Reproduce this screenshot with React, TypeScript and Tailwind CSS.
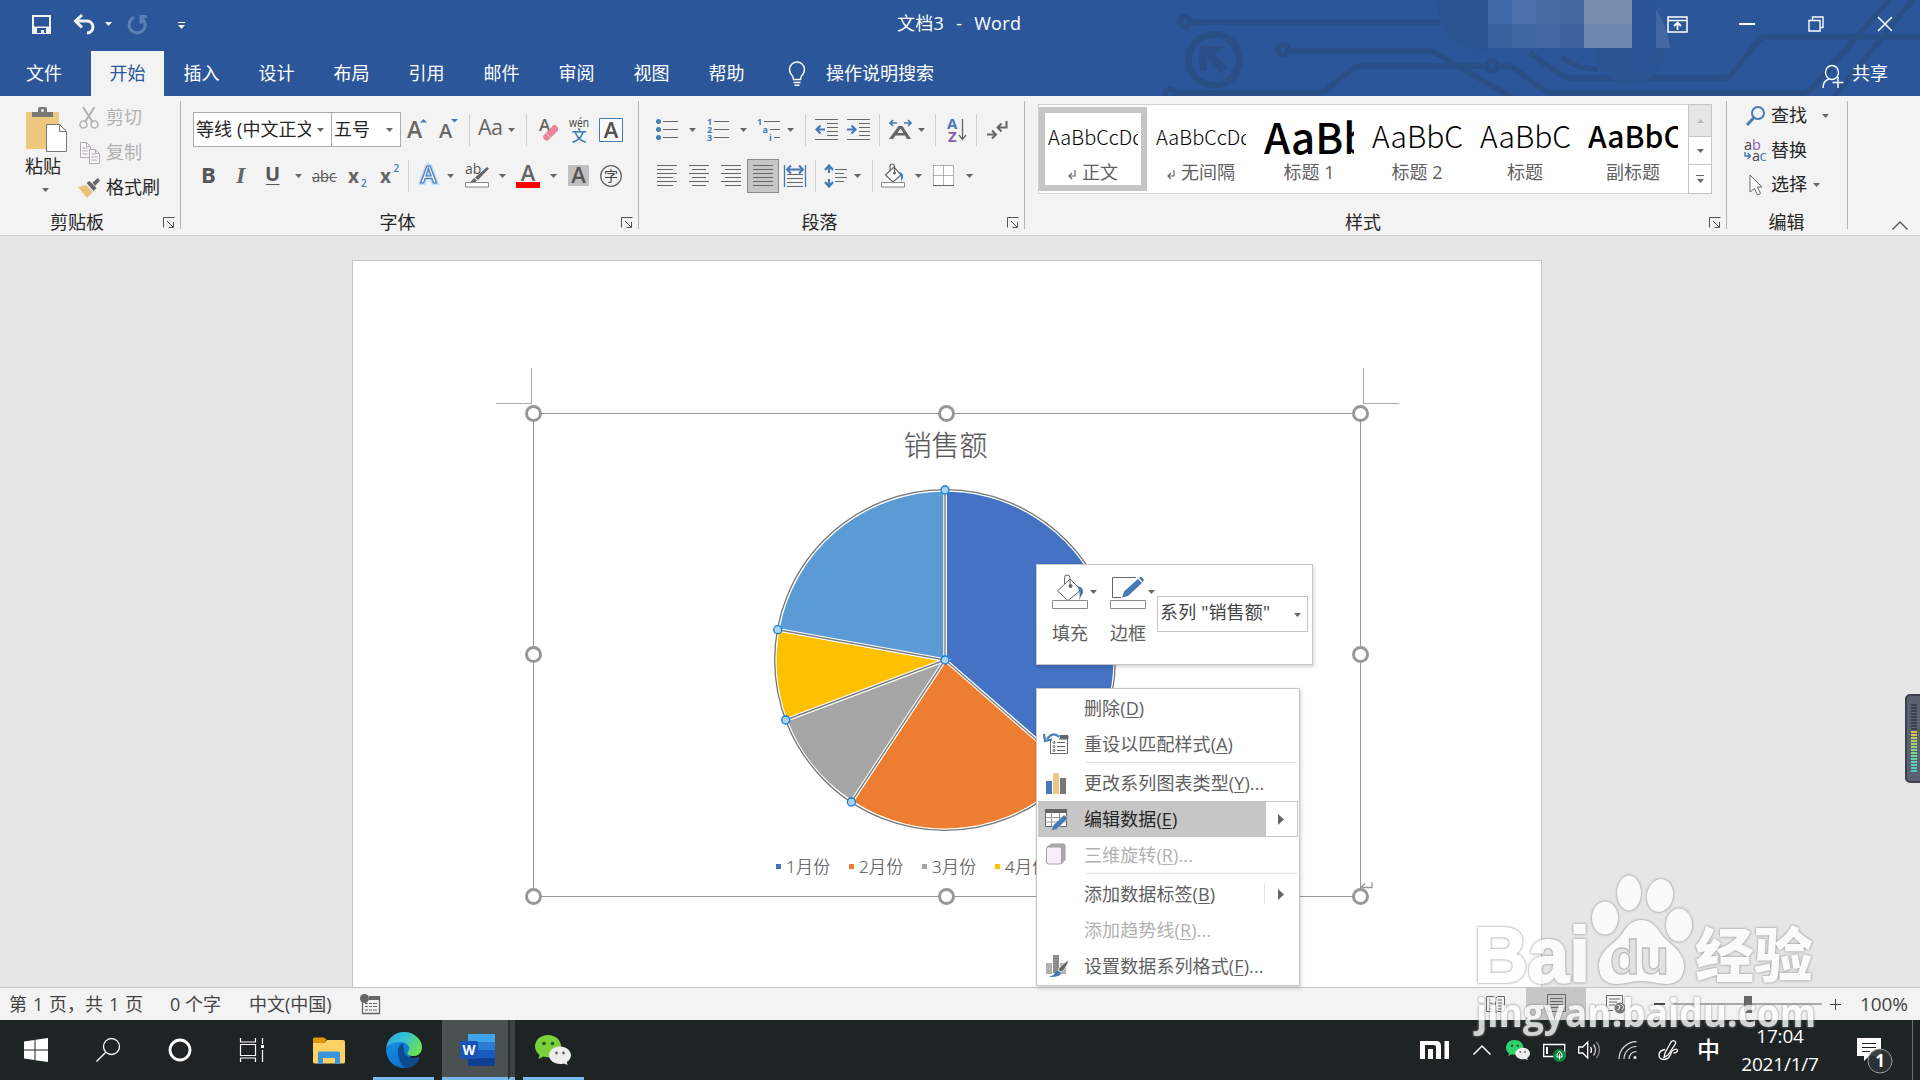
import type { ReactNode } from "react";

const BLUE = "#447ab5";
const GRAY = "#666666";

interface IconProps {
  w: number;
  h: number;
  className?: string;
  children: ReactNode;
}

function Icon({ w, h, className = "", children }: IconProps) {
  return (
    <svg width={w} height={h} viewBox={`0 0 ${w} ${h}`} fill="none" className={`shrink-0 overflow-visible ${className}`}>
      {children}
    </svg>
  );
}

function Caret({ className = "", color = GRAY }: { className?: string; color?: string }) {
  return (
    <Icon w={7} h={4} className={className}>
      <path d="M0 0h7L3.500 4z" fill={color} />
    </Icon>
  );
}

function Sep({ className = "" }: { className?: string }) {
  return <div className={`h-8 w-px shrink-0 bg-[#d0d0d0] ${className}`} />;
}

function Divider() {
  return <div className="mt-[5px] h-32 w-px shrink-0 bg-[#b4b4b4]" />;
}

function GroupLabel({ children, launcher = true, shift = "" }: { children: string; launcher?: boolean; shift?: string }) {
  return (
    <div className="mt-auto flex h-[26px] shrink-0 items-center">
      <span className={`flex-1 text-center ${shift}`}>{children}</span>
      {launcher && (
        <Icon w={12} h={11} className="mr-[5px] mt-px">
          <path d="M.5 10.500V.5h11M4 4l6 6M10.500 5v5.500h-5" stroke="#555" />
        </Icon>
      )}
    </div>
  );
}

/* ---------- header ---------- */

const mosaic = [
  "bg-[#4168a6]", "bg-[#4b70ab]", "bg-[#486ca2]", "bg-[#44679f]", "bg-[#798dae]", "bg-[#798dae]",
  "bg-[#395f9d]", "bg-[#4067a2]", "bg-[#4468a0]", "bg-[#3f639c]", "bg-[#6e87ae]", "bg-[#6e87ae]",
];

function HeaderArt() {
  return (
    <div className="pointer-events-none absolute inset-0 overflow-hidden">
      <svg width="1920" height="96" fill="none" stroke="#2a4f86" strokeWidth="5.5">
        <circle cx="1185" cy="21.500" r="5" />
        <path d="M1190 22H1440" />
        <circle cx="1214" cy="60" r="25.500" strokeWidth="7" />
        <path d="M1199 46h25l-6 7h-4l13 14-6 7-14-14v11h-8z" fill="#2a4f86" stroke="none" />
        <circle cx="1283" cy="50" r="5" />
        <path d="M1289 51h138q6 0 12 4l74 43" />
        <circle cx="1170" cy="94" r="5" />
        <path d="M1176 93h140q6 0 10-3l25-20q5-4 10-4h126" />
        <circle cx="1492" cy="66" r="5" />
        <path d="M1498 66h8q6 0 11 4l26 20q4 3 9 3h250q6 0 9-4L1892-3" />
        <path d="M1530 53l31 22q5 3 10 3h153q5 0 8-4l26-33q3-4 8-4h154" />
        <path d="M1833 98l82-101" />
        <path d="M1562 57q14 12 36 12" />
        <path d="M1488 50q-50 0-51-50h51zM1596 60q10 24 34 24t34-24V48h-68z" fill="#2a5492" stroke="none" />
        <path d="M1632 0h24v72h-24z" fill="#2a5495" stroke="none" />
        <path d="M1656 10q12 16 14 38h-14z" fill="#4267a3" stroke="none" />
      </svg>
      <div className="absolute left-[1488px] top-0 grid grid-cols-6">
        {mosaic.map((c, i) => (
          <div key={i} className={`size-6 ${c}`} />
        ))}
      </div>
    </div>
  );
}

const tabs = ["插入", "设计", "布局", "引用", "邮件", "审阅", "视图", "帮助"];

function Header() {
  return (
    <header className="relative flex h-24 shrink-0 flex-col bg-[#2b579a] text-white">
      <HeaderArt />
      <div className="relative flex h-[51px] items-center pb-[3px]">
        <Icon w={19} h={19} className="ml-8">
          <path d="M1 1h17v17H1z" stroke="#f3f3f3" strokeWidth="2" />
          <path d="M1 11.500h17V18H1z" fill="#f3f3f3" />
          <path d="M5 13h9v5h-2v-3h-3v3H5z" fill="#2b579a" />
        </Icon>
        <Icon w={22} h={19} className="ml-[22px]">
          <path d="M2 6h12a6 6 0 0 1 0 12M9 0L2.500 6 9 12.500" stroke="#f3f3f3" strokeWidth="3" />
        </Icon>
        <Caret color="#f3f3f3" className="ml-[10px]" />
        <Icon w={20} h={19} className="ml-4">
          <path d="M6 2.500a8 8 0 1 0 8 1M19 1.500h-6v7" stroke="#5b7fb3" strokeWidth="3" />
        </Icon>
        <Icon w={7} h={7} className="ml-[30px] mt-[2px]">
          <path d="M0 .5h7" stroke="#f3f3f3" />
          <path d="M0 3h7L3.500 7z" fill="#f3f3f3" />
        </Icon>
        <div className="ml-[712px] w-[124px] whitespace-pre pb-[2px] text-[18px] leading-6 tracking-[0.3px] [word-spacing:1px]">文档3&nbsp; -&nbsp; Word</div>
        <Icon w={21} h={17} className="ml-[646px]">
          <path d="M1 1h19v15H1zM1 4.500h19" stroke="#fff" strokeWidth="1.500" />
          <path d="M10.500 14V7M7 10l3.500-3.500L14 10" stroke="#fff" strokeWidth="1.800" />
        </Icon>
        <div className="ml-[51px] h-[1.500px] w-4 bg-white" />
        <Icon w={16} h={16} className="ml-[53px]">
          <path d="M1 4.500h11V15H1zM4.500 4V1H15v10.500h-3" stroke="#fff" strokeWidth="1.400" />
        </Icon>
        <Icon w={16} h={16} className="ml-[53px]">
          <path d="M1 1l14 14M15 1L1 15" stroke="#fff" strokeWidth="1.500" />
        </Icon>
      </div>
      <nav className="relative flex h-[45px] items-center text-[18px]">
        <span className="w-[91px] pb-px pr-[3px] text-center">文件</span>
        <span className="flex h-full w-[73px] items-center justify-center bg-[#f3f3f3] pb-px text-[#2b579a]">开始</span>
        {tabs.map((t) => (
          <span key={t} className="w-[75px] pb-px text-center">{t}</span>
        ))}
        <Icon w={18} h={24} className="ml-6">
          <path d="M5.500 17.500q0-3-2.500-5.500a7.500 7.500 0 1 1 12 0q-2.500 2.500-2.500 5.500zM5.500 20.500h7M6.500 23.200h5" stroke="#fff" strokeWidth="1.500" />
        </Icon>
        <span className="ml-5 pb-px">操作说明搜索</span>
        <Icon w={22} h={23} className="ml-auto mt-[6px]">
          <ellipse cx="10" cy="7.500" rx="6.500" ry="7" stroke="#fff" strokeWidth="1.400" />
          <path d="M1 23q0-7 6-9M16 12v11M10.500 17.500h11" stroke="#fff" strokeWidth="1.400" />
        </Icon>
        <span className="ml-[8px] mr-8 pb-px">共享</span>
      </nav>
    </header>
  );
}

/* ---------- ribbon ---------- */

function ClipboardGroup() {
  return (
    <div className="flex w-[180px] flex-col">
      <div className="flex">
        <div className="ml-[25px] mt-[11px] flex w-[46px] flex-col">
          <Icon w={41} h={45} className="ml-px">
            <rect y="5" width="33" height="37" rx="1.500" fill="#edc87e" />
            <path d="M6 10V5h6V2q0-2 2-2h5q2 0 2 2v3h6v5z" fill="#777" />
            <circle cx="16.500" cy="3.500" r="1.500" fill="#f3f3f3" />
            <path d="M20.500 17.500h13l7 7v20h-20zM33.500 17.500v7h7" fill="#fff" stroke="#777" />
          </Icon>
          <span className="mt-px leading-[26px]">粘贴</span>
          <Caret className="ml-[17px] mt-[9px]" />
        </div>
        <div className="mt-[4px] flex flex-col pl-2">
          <div className="flex h-[35px] items-center text-[#b1b1b1]">
            <Icon w={20} h={22} className="mr-[7px]">
              <path d="M4 0l9.500 15M15.500 0L6 15" stroke="#b1b1b1" strokeWidth="2" />
              <circle cx="4.500" cy="17.500" r="3.500" stroke="#b1b1b1" strokeWidth="1.600" />
              <circle cx="15.500" cy="17.500" r="3.500" stroke="#b1b1b1" strokeWidth="1.600" />
            </Icon>
            剪切
          </div>
          <div className="flex h-[35px] items-center text-[#b1b1b1]">
            <Icon w={20} h={22} className="mr-[7px]">
              <path d="M1.500.5h6l4 4v11h-10zM7.500.5v4h4M3.500 6h5M3.500 9h5M3.500 12h5" fill="#faf5fa" stroke="#b1a8b1" />
              <path d="M10.500 7.500h6l4 4v10h-10zM16.500 7.500v4h4M12.500 12h4M12.500 15h6M12.500 18h6" fill="#faf5fa" stroke="#b1a8b1" />
            </Icon>
            复制
          </div>
          <div className="flex h-[35px] items-center">
            <Icon w={22} h={20} className="mr-[6px] -ml-px">
              <path d="M0 9l8-2 7 7-6 6z" fill="#ebc27c" />
              <path d="M8.500 5l3-2 7 7-3 3zM14.500 4.500L20 0l2 2.500L17 8z" fill={GRAY} />
            </Icon>
            格式刷
          </div>
        </div>
      </div>
      <GroupLabel shift="pr-[9px]">剪贴板</GroupLabel>
    </div>
  );
}

function FontGroup() {
  return (
    <div className="flex w-[457px] flex-col">
      <div className="mt-4 flex h-[35px] items-center pl-3">
        <div className="flex h-[35px] w-[139px] items-center border border-[#ababab] bg-white pl-[2px] text-[#262626]">
          <span className="w-[115px] overflow-hidden whitespace-nowrap tracking-[0.1px]">等线 (中文正文</span>
          <Caret className="ml-[6px]" />
        </div>
        <div className="-ml-px flex h-[35px] w-[70px] items-center border border-[#ababab] bg-white pl-[2px] text-[#262626]">
          五号
          <Caret className="ml-auto mr-[7px]" />
        </div>
        <Icon w={20} h={22} className="ml-[6px]">
          <text x="0" y="19" fontSize="23" fontWeight="600" fill={GRAY} textLength="15">A</text>
          <path d="M13 3.500h7L16.500 0z" fill={BLUE} />
        </Icon>
        <Icon w={20} h={22} className="ml-3">
          <text x="0" y="19" fontSize="20" fontWeight="600" fill={GRAY} textLength="13">A</text>
          <path d="M12 0h7L15.500 3.500z" fill={BLUE} />
        </Icon>
        <Sep className="ml-[10px]" />
        <Icon w={25} h={22} className="ml-[8px]">
          <text x="0" y="16" fontSize="21.500" fontWeight="500" fill={GRAY} textLength="25">Aa</text>
        </Icon>
        <Caret className="ml-[5px]" />
        <Sep className="ml-[11px]" />
        <Icon w={20} h={22} className="ml-3">
          <text x="0" y="12" fontSize="17" fontWeight="600" fill={GRAY}>A</text>
          <path d="M4 17L14 6.500q2-2 5 2v3L9 21.500q-5 0-5-4.500z" fill="#e8849b" />
          <path d="M7 14l5 5" stroke="#f3c4cf" />
        </Icon>
        <Icon w={20} h={24} className="ml-[10px]">
          <text x="0" y="8.500" fontSize="12" fontWeight="500" fill="#444" textLength="20" lengthAdjust="spacingAndGlyphs">wén</text>
          <text x="2.500" y="22.500" fontSize="15" fontWeight="500" fill={BLUE}>文</text>
        </Icon>
        <Icon w={24} h={24} className="ml-[10px]">
          <path d="M.5.5h23v23H.5z" stroke={BLUE} fill="#fafafa" />
          <text x="12" y="19.500" fontSize="22" fontWeight="600" fill="#505050" textAnchor="middle">A</text>
        </Icon>
      </div>
      <div className="mt-3 flex h-[34px] items-center pl-[22px]">
        <Icon w={13} h={24}>
          <text x="-2" y="18.500" fontSize="22" fontWeight="700" fill="#555">B</text>
        </Icon>
        <Icon w={12} h={24} className="ml-[19px]">
          <text x="1" y="18.500" fontSize="24" fontStyle="italic" fontWeight="700" fill="#666" fontFamily="Liberation Serif">I</text>
        </Icon>
        <Icon w={14} h={24} className="ml-[19px]">
          <text x="-1" y="17" fontSize="20" fontWeight="700" fill="#555">U</text>
          <path d="M0 20.500h13.500" stroke="#555" />
        </Icon>
        <Caret className="ml-[15px]" />
        <Icon w={24} h={24} className="ml-[10px]">
          <text x="0" y="18" fontSize="16" fill="#555" textLength="24" lengthAdjust="spacingAndGlyphs">abc</text>
          <path d="M0 13.500h25" stroke="#666" />
        </Icon>
        <Icon w={19} h={24} className="ml-[12px]">
          <text x="0" y="18.500" fontSize="19" fontWeight="700" fill={GRAY}>x</text>
          <text x="13" y="23" fontSize="10" fontWeight="600" fill={BLUE}>2</text>
        </Icon>
        <Icon w={19} h={24} className="ml-[13px]">
          <text x="0" y="18.500" fontSize="19" fontWeight="700" fill={GRAY}>x</text>
          <text x="13.500" y="8" fontSize="10" fontWeight="600" fill={BLUE}>2</text>
        </Icon>
        <Sep className="ml-[9px]" />
        <Icon w={19} h={24} className="ml-[10px]">
          <text x="9.500" y="19" fontSize="24" fontWeight="600" fill="#fff" stroke="#c3ddf5" strokeWidth="4" textAnchor="middle">A</text>
          <text x="9.500" y="19" fontSize="24" fontWeight="600" fill="#fff" stroke={BLUE} strokeWidth="1.200" textAnchor="middle">A</text>
        </Icon>
        <Caret className="ml-[9px]" />
        <Icon w={24} h={24} className="ml-[11px]">
          <text x="0" y="10" fontSize="14" fontWeight="500" fill="#555">ab</text>
          <path d="M22 3l2 1.500L13 16l-3-2.500zM9 14l3 2.500-2 2H5z" fill={GRAY} />
          <path d="M.5 18.500h23V23H.5z" stroke="#8a8a8a" fill="#fff" />
        </Icon>
        <Caret className="ml-[10px]" />
        <Icon w={24} h={24} className="ml-[10px]">
          <text x="12" y="16.500" fontSize="22" fontWeight="600" fill={GRAY} textAnchor="middle">A</text>
          <path d="M0 18h24v6H0z" fill="#fe0000" />
        </Icon>
        <Caret className="ml-[10px]" />
        <Icon w={21} h={24} className="ml-[11px]">
          <path d="M0 1h21v21H0z" fill="#c0c0c0" />
          <text x="10.500" y="19" fontSize="22" fontWeight="600" fill="#555" textAnchor="middle">A</text>
        </Icon>
        <Icon w={22} h={24} className="ml-[11px]">
          <circle cx="11" cy="12" r="10.300" stroke={GRAY} strokeWidth="1.300" />
          <text x="11" y="17" fontSize="14" fill="#444" textAnchor="middle">字</text>
        </Icon>
      </div>
      <GroupLabel shift="pr-[7px]">字体</GroupLabel>
    </div>
  );
}

function ParagraphGroup() {
  return (
    <div className="flex w-[385px] flex-col">
      <div className="mt-4 flex h-[35px] items-center pl-[17px]">
        <Icon w={22} h={22}>
          <circle cx="2.500" cy="2.500" r="2.500" fill={BLUE} />
          <circle cx="2.500" cy="10.500" r="2.500" fill={BLUE} />
          <circle cx="2.500" cy="18.500" r="2.500" fill={BLUE} />
          <path d="M7 2.500h15M7 10.500h15M7 18.500h15" stroke={GRAY} />
        </Icon>
        <Caret className="ml-[11px]" />
        <Icon w={22} h={22} className="ml-[11px]">
          <g fontSize="9" fontWeight="700" fill={BLUE}>
            <text x="0" y="6">1</text>
            <text x="0" y="14">2</text>
            <text x="0" y="22">3</text>
          </g>
          <path d="M7 2.500h15M7 10.500h15M7 18.500h15" stroke={GRAY} />
        </Icon>
        <Caret className="ml-[11px]" />
        <Icon w={23} h={22} className="ml-[10px]">
          <g fontSize="9" fontWeight="700" fill={BLUE}>
            <text x="0" y="6">1</text>
            <text x="5.500" y="14">a</text>
            <text x="12" y="22">i</text>
          </g>
          <path d="M7 2.500h16M13 10.500h10M17 18.500h6" stroke={GRAY} />
        </Icon>
        <Caret className="ml-[7px]" />
        <Sep className="ml-[11px]" />
        <Icon w={23} h={22} className="ml-[9px]">
          <path d="M0 .5h23M12 4.500h11M12 8.500h11M12 12.500h11M12 16.500h11M0 20.500h23" stroke={GRAY} />
          <path d="M10 10.500H2M5.500 6.500l-4 4 4 4" stroke={BLUE} strokeWidth="2.200" />
        </Icon>
        <Icon w={23} h={22} className="ml-[9px]">
          <path d="M0 .5h23M12 4.500h11M12 8.500h11M12 12.500h11M12 16.500h11M0 20.500h23" stroke={GRAY} />
          <path d="M0 10.500h8M4.500 6.500l4 4-4 4" stroke={BLUE} strokeWidth="2.200" />
        </Icon>
        <Sep className="ml-[9px]" />
        <Icon w={23} h={22} className="ml-[9px]">
          <path d="M8 4H1M4 1L1 4l3 3M15 4h7M19 1l3 3-3 3" stroke={BLUE} strokeWidth="1.700" />
          <path d="M0 20L9.500 7h4L22 20h-4l-2-3.500H6.500L4 20zM8.500 14h6l-3-4.500z" fill={GRAY} fillRule="evenodd" />
        </Icon>
        <Caret className="ml-[6px]" />
        <Sep className="ml-[10px]" />
        <Icon w={20} h={24} className="ml-[11px]">
          <text x="0" y="11" fontSize="15" fontWeight="700" fill={BLUE}>A</text>
          <text x="1" y="23.500" fontSize="15" fontWeight="700" fill="#8e5bb0">Z</text>
          <path d="M15.500 1v20M12 17l3.500 4.500L19 17" stroke={GRAY} strokeWidth="1.300" />
        </Icon>
        <Sep className="ml-[9px]" />
        <Icon w={21} h={20} className="ml-[10px]">
          <path d="M19.500 1v6.500H11M14.500 3.500l-4 4 4 4M0 14.500h8M5 10.500l4 4-4 4" stroke={GRAY} strokeWidth="2" />
        </Icon>
      </div>
      <div className="mt-3 flex h-[34px] items-center pl-[18px]">
        <Icon w={20} h={24}>
          <path d="M0 1.500h20M0 5.500h16M0 9.500h20M0 13.500h16M0 17.500h20M0 21.500h16" stroke={GRAY} />
        </Icon>
        <Icon w={20} h={24} className="ml-3">
          <path d="M0 1.500h20M3 5.500h14M0 9.500h20M3 13.500h14M0 17.500h20M3 21.500h14" stroke={GRAY} />
        </Icon>
        <Icon w={20} h={24} className="ml-3">
          <path d="M0 1.500h20M4 5.500h16M0 9.500h20M4 13.500h16M0 17.500h20M4 21.500h16" stroke={GRAY} />
        </Icon>
        <div className="ml-[6px] flex h-[34px] w-8 items-center justify-center border border-[#8a8a8a] bg-[#c6c6c6]">
          <Icon w={20} h={24}>
            <path d="M0 1.500h20M0 5.500h20M0 9.500h20M0 13.500h20M0 17.500h20M0 21.500h20" stroke={GRAY} />
          </Icon>
        </div>
        <Icon w={22} h={24} className="ml-[5px]">
          <path d="M.5 1v22M21.500 1v22" stroke={BLUE} strokeWidth="1.300" />
          <path d="M3 5.500h16M7 1.500l-4 4 4 4M15 1.500l4 4-4 4" stroke={BLUE} strokeWidth="2" />
          <path d="M3 10.500h16M3 14.500h16M3 18.500h16M3 22.500h16" stroke={GRAY} />
        </Icon>
        <Sep className="ml-[9px]" />
        <Icon w={23} h={24} className="ml-[8px]">
          <path d="M5 2v7M5 15v7M1 6l4-4.500L9 6M1 18l4 4.500L9 18" stroke={BLUE} strokeWidth="2.200" />
          <path d="M11 5.500h12M11 9.500h9M11 13.500h12M11 17.500h9" stroke={GRAY} />
        </Icon>
        <Caret className="ml-[7px]" />
        <Sep className="ml-[11px]" />
        <Icon w={24} h={24} className="ml-[8px]">
          <BucketShape />
          <path d="M.5 18.500h23V23H.5z" stroke="#8a8a8a" fill="#fff" />
        </Icon>
        <Caret className="ml-[10px]" />
        <Icon w={21} h={22} className="ml-[11px]">
          <path d="M0 0h21v21H0z" fill="#fff" />
          <path d="M.5.5h20M.5.5v20M20.500.5v20M10.500.5v20M.5 10.500h20" stroke={GRAY} strokeDasharray="1 1" />
          <path d="M0 20.500h21" stroke={GRAY} />
        </Icon>
        <Caret className="ml-3" />
      </div>
      <GroupLabel shift="pr-[7px]">段落</GroupLabel>
    </div>
  );
}

function BucketShape() {
  return (
    <>
      <path d="M4.500 11L13 3l7 8-8 7z" stroke={GRAY} strokeWidth="1.200" fill="#fafafa" />
      <path d="M9 7V2q0-2 2-2t2.500 2v7" stroke={GRAY} strokeWidth="1.200" />
      <circle cx="13.500" cy="9" r="1.500" fill={GRAY} />
      <path d="M18 8q5 1 4 6l-2 4q1-5-2-10z" fill={BLUE} />
    </>
  );
}

const styleCells = [
  { name: "正文", mark: true, sample: "AaBbCcDd", cls: "text-[20px] font-light" },
  { name: "无间隔", mark: true, sample: "AaBbCcDd", cls: "text-[20px] font-light" },
  { name: "标题 1", mark: false, sample: "AaBb", cls: "pb-[3px] text-[42px] font-medium" },
  { name: "标题 2", mark: false, sample: "AaBbC", cls: "pb-[2px] text-[30px] font-light" },
  { name: "标题", mark: false, sample: "AaBbC", cls: "pb-[2px] text-[30px] font-light" },
  { name: "副标题", mark: false, sample: "AaBbC", cls: "pb-[2px] text-[30px] font-medium" },
];

function StylesGroup() {
  return (
    <div className="flex w-[701px] flex-col">
      <div className="ml-[13px] mt-2 flex h-[90px] w-[674px] border border-[#d2d2d2] bg-white">
        <div className="flex pt-[2px]">
          {styleCells.map((s, i) => (
            <div
              key={s.name}
              className={`flex h-[84px] w-[108px] flex-col items-center ${i === 0 ? "outline-[6px] -outline-offset-[6px] outline-[#c6c6c6]" : ""}`}
            >
              <div className={`mt-[6px] flex h-[47px] w-[90px] items-center overflow-hidden whitespace-nowrap font-['Noto_Sans_CJK_SC'] text-black ${s.cls}`}>
                <span>{s.sample}</span>
              </div>
              <div className="flex h-6 items-center text-[#606060]">
                {s.mark && (
                  <Icon w={8} h={9} className="mr-[6px] mt-1">
                    <path d="M7 0v6H1M4 3L1 6l3 3" stroke={GRAY} strokeWidth="1.200" />
                  </Icon>
                )}
                <span className="whitespace-nowrap">{s.name}</span>
              </div>
            </div>
          ))}
        </div>
        <div className="-my-px -mr-px ml-auto flex w-[24px] flex-col border border-[#c6c6c6]">
          <div className="flex h-[31px] items-center justify-center bg-[#e6e6e6]">
            <Caret color="#b8b8b8" className="rotate-180" />
          </div>
          <div className="flex h-[29px] items-center justify-center border-y border-[#c6c6c6]">
            <Caret />
          </div>
          <div className="flex flex-1 flex-col items-center justify-center gap-[3px]">
            <div className="h-px w-2 bg-[#666]" />
            <Caret />
          </div>
        </div>
      </div>
      <GroupLabel shift="pr-[8px]">样式</GroupLabel>
    </div>
  );
}

function EditingGroup() {
  return (
    <div className="flex w-[121px] flex-col pl-[19px]">
      <div className="mt-[2px] flex h-[35px] items-center">
        <Icon w={19} h={20} className="mr-[6px]">
          <circle cx="12" cy="7" r="6" stroke={BLUE} strokeWidth="2" />
          <path d="M7.500 12L1 19" stroke={BLUE} strokeWidth="3" />
        </Icon>
        查找
        <Caret className="ml-[15px]" />
      </div>
      <div className="flex h-[35px] items-center">
        <Icon w={22} h={24} className="-ml-[2px] mr-[5px]">
          <text x="0" y="11" fontSize="14.500" fill="#444" fontWeight="500">a</text>
          <text x="8" y="11" fontSize="14.500" fill="#8e5bb0" fontWeight="500">b</text>
          <text x="8" y="22" fontSize="14.500" fill="#444" fontWeight="500">a</text>
          <text x="15.500" y="22" fontSize="14.500" fill={BLUE} fontWeight="500">c</text>
          <path d="M1 13v4h5M3.500 14l3 3-3 3" stroke={BLUE} strokeWidth="1.400" />
        </Icon>
        替换
      </div>
      <div className="-mt-px flex h-[35px] items-center">
        <Icon w={15} h={22} className="ml-[3px] mr-[7px]">
          <path d="M1 1l12 12H8.500l3 6.500-3 1.500-3-6.500L1 18z" stroke={GRAY} fill="#fff" />
        </Icon>
        选择
        <Caret className="ml-[6px]" />
      </div>
      <GroupLabel launcher={false} shift="-ml-[21px]">编辑</GroupLabel>
    </div>
  );
}

function Ribbon() {
  return (
    <section className="flex h-[140px] shrink-0 border-b border-[#d2d2d2] bg-[#f3f3f3] text-[18px] text-[#262626]">
      <ClipboardGroup />
      <Divider />
      <FontGroup />
      <Divider />
      <ParagraphGroup />
      <Divider />
      <StylesGroup />
      <Divider />
      <EditingGroup />
      <div className="-ml-px">
        <Divider />
      </div>
      <Icon w={16} h={9} className="mb-1 ml-auto mr-[12px] mt-[125px]">
        <path d="M.5 8.500L8 1l7.500 7.500" stroke="#555" strokeWidth="1.400" />
      </Icon>
    </section>
  );
}

/* ---------- document ---------- */

// Slice boundaries as offsets from the pie centre, clockwise from the top.
const R = 170;
const edges = [
  [0, -170],
  [128.2, 111.8],
  [-93.6, 142],
  [-159.3, 60],
  [-167.3, -30.3],
];
const sliceColors = ["#4472c4", "#ed7d31", "#a5a5a5", "#ffc000", "#5b9bd5"];

function Pie() {
  const cx = 171;
  return (
    <svg width="342" height="342" fill="none" className="overflow-visible">
      {edges.map(([x, y], i) => {
        const [nx, ny] = edges[(i + 1) % edges.length];
        return (
          <path
            key={i}
            d={`M${cx} ${cx}L${cx + x} ${cx + y}A${R} ${R} 0 0 1 ${cx + nx} ${cx + ny}Z`}
            fill={sliceColors[i]}
            stroke="#fff"
            strokeWidth="3.500"
          />
        );
      })}
      {edges.map(([x, y], i) => (
        <path key={i} d={`M${cx} ${cx}L${cx + x} ${cx + y}`} stroke="#7f7f7f" strokeWidth="1.400" />
      ))}
      <circle cx={cx} cy={cx} r={R + 0.3} stroke="#757575" strokeWidth="1.300" />
      {[[0, 0], ...edges].map(([x, y], i) => (
        <circle key={i} cx={cx + x} cy={cx + y} r="4" fill="#a9d1f2" stroke="#0f7bd8" strokeWidth="1.300" />
      ))}
    </svg>
  );
}

const legend = [
  { label: "1月份", dot: "bg-[#4472c4]" },
  { label: "2月份", dot: "bg-[#ed7d31]" },
  { label: "3月份", dot: "bg-[#a5a5a5]" },
  { label: "4月份", dot: "bg-[#ffc000]" },
  { label: "5月份", dot: "bg-[#5b9bd5]" },
];

const handles = [
  "-left-[9px] -top-[9px]",
  "left-[404px] -top-[9px]",
  "-right-[9px] -top-[9px]",
  "-left-[9px] top-[232px]",
  "-right-[9px] top-[232px]",
  "-left-[9px] -bottom-[9px]",
  "left-[404px] -bottom-[9px]",
  "-right-[9px] -bottom-[9px]",
];

function Page() {
  return (
    <div className="ml-[352px] mt-6 h-[760px] w-[1190px] border border-[#c6c6c6] bg-white pl-[143px] pr-[142px] pt-[107px]">
      <div className="flex justify-between">
        <div className="h-9 w-9 border-b border-r border-[#ababab]" />
        <div className="h-9 w-9 border-b border-l border-[#ababab]" />
      </div>
      <div className="relative ml-[37px] mt-[9px] flex h-[484px] w-[828px] flex-col items-center border border-[#979797]">
        <div className="-ml-[3px] mt-[11px] h-10 text-[28px] font-normal leading-10 text-[#595959]">
          <span className="font-light [-webkit-text-stroke:0.2px_#595959]">销售额</span>
        </div>
        <div className="-ml-[4px] mt-[24px] h-[342px]">
          <Pie />
        </div>
        <div className="mt-[22px] flex gap-[15px] self-start pl-[242px] text-[17px] font-light tracking-[0.3px] text-[#595959] [-webkit-text-stroke:0.2px_#595959]">
          {legend.map((l) => (
            <div key={l.label} className="flex w-[58px] items-center gap-[5px] whitespace-nowrap">
              <span className={`size-[5px] shrink-0 ${l.dot}`} />
              {l.label}
            </div>
          ))}
        </div>
        {handles.map((h) => (
          <span key={h} className={`absolute size-[17px] rounded-full border-[3px] border-[#979797] bg-white ${h}`} />
        ))}
        <svg width="13" height="10" fill="none" className="absolute bottom-[4px] -right-[13px]">
          <path d="M12 0v5.500H1M5 1.500l-4 4" stroke="#979797" strokeWidth="1.300" />
        </svg>
      </div>
    </div>
  );
}

function MiniToolbar() {
  return (
    <div className="absolute left-[1036px] top-[564px] flex h-[101px] w-[277px] border border-[#c6c6c6] bg-white text-[18px] text-[#606060] shadow-[1px_2px_4px_rgba(0,0,0,0.18)]">
      <div className="ml-[15px] mt-[10px] w-[58px]">
        <div className="flex">
          <Icon w={36} h={34}>
            <path d="M5.500 16L18 4l11 11-13 10.500z" stroke={GRAY} fill="#fff" />
            <path d="M12.500 9V2.500Q12.500 0 15 0t3 2.500V11" stroke={GRAY} />
            <circle cx="18.500" cy="11" r="2" fill={GRAY} />
            <path d="M25 11q7 1 6 7l-4 7q2-7-2-14z" fill={BLUE} />
            <path d="M.5 25.500h35v8H.5z" stroke="#8a8a8a" fill="#fff" />
          </Icon>
          <Caret className="ml-[2px] mt-[15px]" />
        </div>
        <div className="mt-3 leading-6">填充</div>
      </div>
      <div className="mt-[10px] w-[47px]">
        <div className="flex">
          <Icon w={36} h={34}>
            <path d="M26 2.500H2.500v20H11" stroke={GRAY} />
            <path d="M12 22.500l2-6L28 4l4 4-14 13zM29 3l2-1.500L34 5l-1.500 2z" fill={BLUE} />
            <path d="M.5 25.500h35v8H.5z" stroke="#8a8a8a" fill="#fff" />
          </Icon>
          <Caret className="ml-[2px] mt-[15px]" />
        </div>
        <div className="mt-3 leading-6">边框</div>
      </div>
      <div className="mt-[31px] flex h-9 w-[151px] items-center border border-[#c6c6c6] pb-[3px] pl-[2px] text-[#444]">
        <span className="whitespace-nowrap tracking-[0.15px]">系列 "销售额"</span>
        <Caret className="ml-auto mr-[6px] mt-1" />
      </div>
    </div>
  );
}

interface MenuItem {
  label: string;
  hotkey: string;
  more?: boolean;
  disabled?: boolean;
  active?: boolean;
  submenu?: boolean;
  divider?: boolean;
  icon?: ReactNode;
}

const menu: MenuItem[] = [
  { label: "删除", hotkey: "D" },
  {
    label: "重设以匹配样式",
    hotkey: "A",
    divider: true,
    icon: (
      <Icon w={24} h={24}>
        <path d="M6.500 8v13.500h17V3.500H17M15 4h9v3h-9" stroke={GRAY} />
        <path d="M16 3h8v4h-8z" fill={GRAY} />
        <path d="M13 10.500h8M13 14.500h8M13 18.500h8" stroke={GRAY} />
        <g stroke={GRAY}>
          <circle cx="10" cy="10.500" r="1" />
          <circle cx="10" cy="14.500" r="1" />
          <circle cx="10" cy="18.500" r="1" />
        </g>
        <path d="M15 5q-6-6-12 2M0 2l1 7 7-1.500" stroke={BLUE} strokeWidth="2.200" />
      </Icon>
    ),
  },
  {
    label: "更改系列图表类型",
    hotkey: "Y",
    more: true,
    icon: (
      <Icon w={24} h={24}>
        <path d="M2 10h6v13H2z" fill={BLUE} />
        <path d="M9 2h6v21H9z" fill="#ebc685" />
        <path d="M16 7h6v16h-6z" fill="#777" />
      </Icon>
    ),
  },
  {
    label: "编辑数据",
    hotkey: "E",
    active: true,
    submenu: true,
    icon: (
      <Icon w={24} h={24}>
        <path d="M1.500 3.500h21v16h-21z" stroke={GRAY} fill="#fff" />
        <path d="M2 10.500h20M2 15h20M7.500 6v13M15.500 6v13" stroke="#999" />
        <path d="M1 2h22v4H1z" fill={GRAY} />
        <path d="M7 24l2.500-6L20 8l4 3-11 11z" fill={BLUE} stroke="#c6c6c6" strokeWidth=".7" />
      </Icon>
    ),
  },
  {
    label: "三维旋转",
    hotkey: "R",
    more: true,
    disabled: true,
    divider: true,
    icon: (
      <Icon w={24} h={24}>
        <path d="M3 4l5-3h12l1 1v15l-4 4z" fill="#a9a9a9" stroke="#a0a0a0" strokeLinejoin="round" />
        <rect x="2.500" y="4" width="15" height="17" rx="2" fill="#f6eff8" stroke="#a0a0a0" />
      </Icon>
    ),
  },
  { label: "添加数据标签", hotkey: "B", submenu: true },
  { label: "添加趋势线", hotkey: "R", more: true, disabled: true },
  {
    label: "设置数据系列格式",
    hotkey: "F",
    more: true,
    icon: (
      <Icon w={24} h={24}>
        <path d="M2 9h6v11H2zM16 9h6v11h-6z" fill="#b1b1b1" />
        <path d="M9 1h6v18H9z" fill="#8c8c8c" />
        <path d="M24 6l-8 7-2 3 3 2 3-2 4-7z" fill={GRAY} stroke="#fff" strokeWidth=".7" />
        <path d="M6 22q4 0 5-4 4-2 6 1 0 4-11 4z" fill={BLUE} />
      </Icon>
    ),
  },
];

function ContextMenu() {
  return (
    <div className="absolute left-[1036px] top-[688px] w-[264px] border border-[#c6c6c6] bg-white p-px text-[18px] shadow-[1px_2px_4px_rgba(0,0,0,0.18)]">
      {menu.map((m) => (
        <div key={m.label}>
          <div
            className={`flex h-9 items-center ${m.active ? "bg-[#c6c6c6] text-[#262626]" : m.disabled ? "text-[#b1b1b1]" : "text-[#606060]"}`}
          >
            <div className="ml-[6px] w-[40px]">{m.icon}</div>
            <span className="whitespace-nowrap tracking-[0.1px]">
              {m.label}(<span className="underline underline-offset-2">{m.hotkey}</span>){m.more && "..."}
            </span>
            {m.submenu && (
              <div className={`ml-auto mr-px flex items-center ${m.active ? "h-[34px] w-[31px] bg-white pl-3" : "h-5 w-[33px] border-l border-[#e1e1e1] pl-[13px]"}`}>
                <Icon w={6} h={11}>
                  <path d="M0 0l6 5.500L0 11z" fill={GRAY} />
                </Icon>
              </div>
            )}
          </div>
          {m.divider && <div className="mb-[2px] ml-[48px] mr-px h-px bg-[#e1e1e1]" />}
        </div>
      ))}
    </div>
  );
}

const meter = [
  "bg-[#3b404b]", "bg-[#3b404b]", "bg-[#3b404b]", "bg-[#3b404b]", "bg-[#3b404b]", "bg-[#3b404b]", "bg-[#3b404b]", "bg-[#3b404b]", "bg-[#3b404b]",
  "bg-[#d8c84a]", "bg-[#d2cc50]", "bg-[#c4cf5a]", "bg-[#b4d264]", "bg-[#a6d46e]", "bg-[#98d478]", "bg-[#88d484]", "bg-[#7ad490]",
  "bg-[#6cd49a]", "bg-[#62d4a4]", "bg-[#5ad2ae]", "bg-[#56d0b4]", "bg-[#52ceb8]", "bg-[#50ccba]",
];

function MeterWidget() {
  return (
    <div className="absolute left-[1905px] top-[694px] flex h-[89px] w-[20px] flex-col gap-px rounded-l-[5px] border-2 border-[#3c414c] bg-[#5a6272] pl-1 pt-2">
      {meter.map((c, i) => (
        <div key={i} className={`h-[2px] w-[6px] shrink-0 ${c}`} />
      ))}
    </div>
  );
}

/* ---------- bottom bars ---------- */

function StatusBar() {
  return (
    <footer className="flex h-[33px] shrink-0 items-center border-t border-[#c6c6c6] bg-[#f3f3f3] text-[18px] text-[#444]">
      <span className="ml-[9px] w-[161px] whitespace-nowrap [word-spacing:1.200px]">第 1 页，共 1 页</span>
      <span className="w-[79px] whitespace-nowrap">0 个字</span>
      <span className="w-[111px] whitespace-nowrap">中文(中国)</span>
      <Icon w={20} h={20}>
        <path d="M2.500 5v14.500h17V2" stroke={GRAY} strokeWidth="1.300" />
        <path d="M9 2h11v4H9z" fill={GRAY} />
        <path d="M5 9.500h3m1 0h3m1 0h4M5 12.500h3m1 0h3m1 0h4M5 16h3m1 0h3m1 0h4" stroke={GRAY} strokeWidth="1.200" />
        <circle cx="4.500" cy="4.500" r="4.500" fill={GRAY} />
      </Icon>
      <Icon w={19} h={17} className="ml-auto">
        <path d="M.5.5h7l2 2 2-2h7v15h-7l-2 1-2-1h-7zM9.500 2.500v14M3 4h4M3 7h4M3 10h4M3 13h4M12 4h4M12 7h4M12 10h4M12 13h4" stroke={GRAY} />
      </Icon>
      <div className="ml-[21px] flex h-full w-[60px] items-center justify-center bg-[#c6c6c6] pb-[2px]">
        <Icon w={19} h={18}>
          <path d="M.5.5h18v17H.5zM3 4.500h13M3 7.500h13M3 10.500h13M3 13.500h13" stroke={GRAY} />
        </Icon>
      </div>
      <Icon w={20} h={18} className="ml-[20px]">
        <path d="M7 15.500H.5V.5h16V8M3 4h11M3 7h8M3 10h6" stroke={GRAY} />
        <circle cx="14" cy="13" r="5.500" fill="#777" />
        <path d="M11 10l3 1-1 3-2 1M15 9l3 3-2 3" stroke="#f3f3f3" />
      </Icon>
      <div className="ml-[28px] h-[1.500px] w-[11px] bg-[#444]" />
      <div className="ml-[9px] flex h-4 w-[148px] items-center bg-[linear-gradient(#ababab,#ababab)] bg-[length:100%_2px] bg-center bg-no-repeat">
        <div className="ml-[70px] h-[17px] w-2 bg-[#666]" />
      </div>
      <Icon w={11} h={11} className="ml-[8px]">
        <path d="M0 5.500h11M5.500 0v11" stroke="#444" />
      </Icon>
      <span className="ml-[19px] mr-[11px] w-[49px] whitespace-nowrap text-[19px] tracking-[-0.1px]">100%</span>
    </footer>
  );
}

function WeChat({ w, h, dark = false }: { w: number; h: number; dark?: boolean }) {
  return (
    <svg width={w} height={h} viewBox="0 0 36 30" fill="none" className="shrink-0">
      <path d="M13 0C5.500 0 0 5 0 11.500c0 3.500 2 6.500 4.500 8.500L3.500 24l5-2.500q2 .7 4.500.7c7.500 0 13-4.800 13-10.900S20.500 0 13 0z" fill={dark ? "#2fd16c" : "#7bd13c"} />
      <circle cx="9" cy="8.500" r="1.800" fill="#1f5a20" />
      <circle cx="17.500" cy="8.500" r="1.800" fill="#1f5a20" />
      <path d="M25 11.500c-6 0-11 4-11 8.800S19 29 25 29q2 0 3.700-.5l4 1.500-1-3c2.600-1.500 4.300-3.900 4.300-6.700 0-4.800-5-8.800-11-8.800z" fill="#ededed" />
      <circle cx="21.500" cy="18" r="1.400" fill="#666" />
      <circle cx="28.500" cy="18" r="1.400" fill="#666" />
    </svg>
  );
}

function Taskbar() {
  return (
    <div className="flex h-[60px] shrink-0 items-center bg-[#1e2424] text-white">
      <Icon w={24} h={24} className="ml-6">
        <path d="M0 3.500L10.500 2v9.500H0zM11.500 1.800L24 0v11.500H11.500zM0 12.500h10.500V22L0 20.500zM11.500 12.500H24V24l-12.500-1.800z" fill="#fff" />
      </Icon>
      <Icon w={24} h={24} className="ml-12">
        <circle cx="15.500" cy="8.500" r="8" stroke="#fff" strokeWidth="1.300" />
        <path d="M10 14L.5 23.500" stroke="#fff" strokeWidth="1.500" />
      </Icon>
      <Icon w={24} h={24} className="ml-12">
        <circle cx="12" cy="12" r="10" stroke="#fff" strokeWidth="2.800" />
      </Icon>
      <Icon w={24} h={24} className="ml-12">
        <path d="M.5 0v4h15V0M.5 6.500h15v11H.5zM.5 24v-4h15v4M22.500 0v6M22.500 12v12" stroke="#fff" strokeWidth="1.200" />
        <path d="M21 7h3v3h-3z" fill="#fff" />
      </Icon>
      <Icon w={32} h={27} className="ml-[49px]">
        <path d="M0 2q0-1.500 1.500-1.500H11l3 2.500h-1l-2 3H0z" fill="#e09a08" />
        <path d="M0 6h11l3-3h16q2 0 2 2v20q0 1.500-2 1.500H2q-2 0-2-1.500z" fill="#fed163" />
        <path d="M5 27V16q0-1.500 1.500-1.500h19q1.500 0 1.500 1.500v11h-5v-6H10v6z" fill="#3a94dc" />
      </Icon>
      <div className="ml-[28px] flex h-full w-[61px] flex-col items-center border-b-[3px] border-[#76b9ed] pt-3">
        <svg width="36" height="36" viewBox="0 0 36 36" fill="none">
          <defs>
            <linearGradient id="edgeTop" x1="0" y1="0" x2="1" y2="0.5">
              <stop offset="0" stopColor="#2a9fe4" />
              <stop offset="0.5" stopColor="#35c1d8" />
              <stop offset="1" stopColor="#6ae05a" />
            </linearGradient>
            <linearGradient id="edgeLeft" x1="0" y1="0" x2="1" y2="1">
              <stop offset="0" stopColor="#1a8fe0" />
              <stop offset="0.6" stopColor="#0b78d4" />
              <stop offset="1" stopColor="#0c59a4" />
            </linearGradient>
          </defs>
          {/* body, then the dark inner swirl, then the wave on top */}
          <path d="M0 17C0 28 8 36 18 36c7 0 12-3 15-8q-3 2-8 1.500L22 10 8 8z" fill="url(#edgeLeft)" />
          <path d="M12 19c0-5 3-7 6-8-1 2-1 4 0 7 0 5 4 8 9 8 3 0 5-1 6-1q1 1 0 3c-3 5-8 8-13 8-5-2-8-9-8-17z" fill="#114a8b" />
          <path d="M0 17C1 6 9 0 18 0c11 0 18 8 18 15 0 6-4 9-8 9-5 0-8-2-6-4 3-4 0-10-8-10C7 10 2 13 0 17z" fill="url(#edgeTop)" />
        </svg>
      </div>
      <div className="ml-2 flex h-full w-[66px] flex-col border-b-[3px] border-[#76b9ed] bg-[#4b5050] pl-[18px] pt-[13px]">
        <Icon w={35} h={34}>
          <path d="M8 2q0-1 1-1h26v8H8z" fill="#41a5ee" />
          <path d="M8 9h27v8H8z" fill="#2b7cd3" />
          <path d="M8 17h27v8H8z" fill="#185abd" />
          <path d="M8 25h27v8H9q-1 0-1-1z" fill="#103f91" />
          <rect y="8" width="18" height="18" rx="1.500" fill="#1a52b5" />
          <text x="9" y="22" fontSize="14" fontWeight="700" fill="#fff" textAnchor="middle" textLength="13" lengthAdjust="spacingAndGlyphs">W</text>
        </Icon>
      </div>
      <div className="h-full w-[7px] border-b-[3px] border-l-2 border-[#76b9ed] border-l-[#2a2e2e] bg-[#3c4141]" />
      <div className="ml-2 flex h-full w-[61px] justify-center border-b-[3px] border-[#76b9ed] pr-[2px] pt-[15px]">
        <WeChat w={36} h={30} />
      </div>

      <Icon w={29} h={18} className="ml-auto">
        <path d="M0 0h16q5 0 5 5v13h-5V6q0-2-2-2H5v14H0zM8 8h5v10H8zM24.500 0H29v18h-4.500z" fill="#fff" />
      </Icon>
      <Icon w={18} h={10} className="ml-6">
        <path d="M.5 9.500L9 1l8.500 8.500" stroke="#fff" strokeWidth="1.500" />
      </Icon>
      <div className="ml-[15px]">
        <WeChat w={24} h={20} dark />
      </div>
      <Icon w={23} h={22} className="ml-[13px]">
        <path d="M.7 5.500h21v12h-21z" stroke="#fff" strokeWidth="1.300" />
        <path d="M3 8h2v7H3z" fill="#fff" />
        <circle cx="16.500" cy="16.500" r="6.500" fill="#10893e" />
        <path d="M16.500 20.500v-6M16.500 12q-3.500 3-2.500 6h5q1-3-2.500-6z" stroke="#fff" />
      </Icon>
      <Icon w={23} h={18} className="ml-3">
        <path d="M.7 6h4l5-5v16l-5-5h-4z" stroke="#fff" strokeWidth="1.300" />
        <path d="M12.500 6q2 3 0 6" stroke="#fff" strokeWidth="1.300" />
        <path d="M15.500 3.500q4 5.500 0 11" stroke="#ccc" strokeWidth="1.300" />
        <path d="M18.500 1q6 8 0 16" stroke="#888" strokeWidth="1.300" />
      </Icon>
      <Icon w={19} h={18} className="ml-[17px]">
        <path d="M1 18A17.500 17.500 0 0 1 18.500.7M6 18A12.500 12.500 0 0 1 18.500 5.500M11 18a7.500 7.500 0 0 1 7.500-7.500" stroke="#ddd" strokeWidth="1.200" />
        <circle cx="17" cy="16.500" r="1.500" fill="#fff" />
      </Icon>
      <Icon w={20} h={20} className="ml-[21px]">
        <path d="M7 13L13 2q1.500-2 3.500-1t.5 3.500L10 15l-4 2.500z" stroke="#fff" strokeWidth="1.300" />
        <path d="M7 9.500q-6 1-6 5.500t5 4.500q5-.5 6.500-5 1-4 4-5t3 1q0 2-4 2.500" stroke="#fff" strokeWidth="1.300" />
      </Icon>
      <span className="ml-[19px] w-[24px] pb-[2px] text-[23px] font-medium leading-[50px]">中</span>
      <div className="ml-[17px] flex w-[84px] flex-col items-center gap-[4px] text-[19px] leading-6 tracking-[-0.2px]">
        <span className="whitespace-nowrap">17:04</span>
        <span className="whitespace-nowrap">2021/1/7</span>
      </div>
      <Icon w={36} h={36} className="ml-[35px] mt-2">
        <path d="M0 2h24v18H12l-5 5v-5H0z" fill="#fff" />
        <path d="M5 7.500h14M5 11.500h14M5 15.500h8" stroke="#1e2424" strokeWidth="1.200" />
        <circle cx="23" cy="25" r="12" fill="#2d3232" fillOpacity="0.92" stroke="#999" />
        <text x="23" y="31" fontSize="17" fontWeight="700" fill="#fff" textAnchor="middle">1</text>
      </Icon>
      <div className="ml-[19px] mr-[7px] h-full w-px bg-[#6a6e6e]" />
    </div>
  );
}

function Watermark() {
  return (
    <svg
      width="360"
      height="180"
      viewBox="1465 865 360 180"
      className="pointer-events-none absolute left-[1465px] top-[865px] overflow-visible opacity-80 [filter:drop-shadow(0_0_1px_rgba(120,120,120,0.8))_drop-shadow(0_0_1px_rgba(140,140,140,0.5))]"
      fill="#fff"
    >
      <text x="1474" y="982" fontSize="78" fontWeight="700" stroke="#fff" strokeWidth="2" textLength="116" lengthAdjust="spacingAndGlyphs" className="font-['Liberation_Sans']">Bai</text>
      <ellipse cx="1605" cy="918" rx="13" ry="16.500" />
      <ellipse cx="1629" cy="893" rx="12" ry="17.500" />
      <ellipse cx="1660" cy="895.500" rx="13" ry="16.500" transform="rotate(10 1660 895.500)" />
      <ellipse cx="1679" cy="925" rx="13" ry="16.500" />
      <path d="M1641 920c10 0 15 6 20 14 7 10 23 16 23 32 0 13-8 18-18 18-8 0-14-3-25-3s-15 3-24 3c-11 0-18-6-18-18 0-16 16-22 23-32 5-8 10-14 19-14z" />
      <text x="1610" y="974" fontSize="49" fontWeight="700" fill="#e2e2e2" stroke="#b5b5b5" strokeWidth="1.300" textLength="59" lengthAdjust="spacingAndGlyphs" className="font-['Liberation_Sans']">du</text>
      <text x="1695" y="977" fontSize="59" fontWeight="900" textLength="118" className="font-['Noto_Sans_CJK_SC']">经验</text>
      <text x="1476" y="1027" fontSize="39" fontWeight="700" textLength="340" lengthAdjust="spacingAndGlyphs">jingyan.baidu.com</text>
    </svg>
  );
}

export default function App() {
  return (
    <div className="relative flex h-[1080px] w-[1920px] flex-col overflow-hidden bg-[#e6e6e6] font-['Open_Sans','Noto_Sans_CJK_SC',sans-serif] leading-[27px]">
      <Header />
      <Ribbon />
      <main className="min-h-0 flex-1 overflow-hidden">
        <Page />
      </main>
      <StatusBar />
      <Taskbar />
      <MiniToolbar />
      <ContextMenu />
      <MeterWidget />
      <Watermark />
    </div>
  );
}
